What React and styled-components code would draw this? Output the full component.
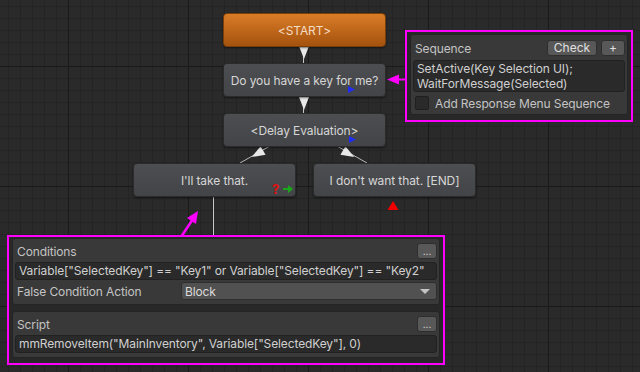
import styled, { createGlobalStyle } from 'styled-components'

const Global = createGlobalStyle`
  html, body { margin: 0; padding: 0; background: #282828; }
  body { font-family: Inter, "Noto Sans", sans-serif; }
`

const Canvas = styled.div`
  position: relative;
  width: 640px;
  height: 372px;
  overflow: hidden;
  background-color: #2a2a2a;
  background-image:
    linear-gradient(to right, #1a1a1a 1px, transparent 1px),
    linear-gradient(to bottom, #1a1a1a 1px, transparent 1px),
    linear-gradient(to right, #242424 1px, transparent 1px),
    linear-gradient(to bottom, #242424 1px, transparent 1px);
  background-size: 120px 120px, 120px 120px, 12px 12px, 12px 12px;
  background-position: 68px 0, 0 66px, 8px 0, 0 6px;
`

const Wires = styled.svg`
  position: absolute;
  left: 0;
  top: 0;
  width: 640px;
  height: 372px;
`

const Node = styled.div`
  position: absolute;
  width: 163px;
  height: 34px;
  box-sizing: border-box;
  display: flex;
  align-items: center;
  justify-content: center;
  border-radius: 4px;
  border: 1px solid ${p => (p.$start ? '#7a3e08' : '#2b2b2b')};
  background: ${p =>
    p.$start
      ? 'linear-gradient(#d97c27, #a4520e)'
      : 'linear-gradient(#4d4e51, #434447)'};
  box-shadow: 0 1px 2px rgba(0, 0, 0, 0.5);
  color: ${p => (p.$start ? '#f4dcc4' : '#d6d6d6')};
  font-size: 12px;
  letter-spacing: -0.1px;
`

const Badge = styled.svg`
  position: absolute;
  overflow: visible;
`

const Panel = styled.div`
  position: absolute;
  box-sizing: border-box;
  border: 2px solid #ff00ff;
  padding: ${p => p.$pad};
  background: #282828;
  color: #c4c4c4;
  font-size: 12px;
  letter-spacing: -0.12px;
`

const Section = styled.div`
  background: #393939;
  border: 1px solid #242424;
  border-radius: 3px;
  padding: ${p => p.$pad};
  display: flex;
  flex-direction: column;
  gap: ${p => p.$gap || '3px'};
  & + & { margin-top: 6px; }
`

const HeaderRow = styled.div`
  display: flex;
  align-items: center;
  height: 16px;
  padding-left: 2px;
  gap: 4px;
`

const Label = styled.span`
  flex: 1;
  color: #c4c4c4;
  white-space: nowrap;
`

const SmallButton = styled.div`
  height: 16px;
  width: ${p => p.$w || '20px'};
  box-sizing: border-box;
  display: flex;
  align-items: center;
  justify-content: center;
  background: #585858;
  border: 1px solid #2e2e2e;
  border-radius: 3px;
  color: #e0e0e0;
  font-size: ${p => p.$fs || '12px'};
  letter-spacing: 0;
  line-height: 1;
`

const Field = styled.div`
  height: ${p => p.$h || '18px'};
  box-sizing: border-box;
  background: #2a2a2a;
  border: 1px solid #212121;
  border-radius: 3px;
  padding: ${p => p.$pad || '0 3px'};
  color: #d0d0d0;
  white-space: nowrap;
  line-height: ${p => p.$lh || '16px'};
`

const Row = styled.div`
  display: flex;
  align-items: center;
  height: 18px;
  padding-left: 2px;
`

const RowLabel = styled.span`
  width: 164px;
  flex-shrink: 0;
`

const Dropdown = styled.div`
  flex: 1;
  height: 18px;
  box-sizing: border-box;
  display: flex;
  align-items: center;
  justify-content: space-between;
  padding: 0 6px 0 3px;
  background: #515151;
  border: 1px solid #2e2e2e;
  border-radius: 3px;
  color: #dcdcdc;
`

const Caret = styled.span`
  width: 0;
  height: 0;
  border-left: 5px solid transparent;
  border-right: 5px solid transparent;
  border-top: 5px solid #c4c4c4;
`

const CheckRow = styled.div`
  display: flex;
  align-items: center;
  gap: 6px;
  height: 14px;
  padding-left: 2px;
`

const CheckBox = styled.span`
  width: 12px;
  height: 12px;
  background: #2a2a2a;
  border: 1px solid #1f1f1f;
  border-radius: 2px;
`

const Arrow = ({ x, y, angle }) => (
  <polygon
    points="-5,-7 5,-7 0,6"
    fill="#e8e8e8"
    transform={`translate(${x} ${y}) rotate(${angle})`}
  />
)

const Flag = () => (
  <polygon points="0,0 7,3.5 0,7" fill="#1f2cf5" />
)

export default function App() {
  return (
    <Canvas>
      <Global />
      <Wires>
        <line x1="303.5" y1="46" x2="303.5" y2="63" stroke="#c8c8c8" strokeWidth="1" />
        <line x1="303.5" y1="97" x2="303.5" y2="113" stroke="#c8c8c8" strokeWidth="1" />
        <line x1="270" y1="146" x2="240" y2="163" stroke="#b8b8b8" strokeWidth="1" />
        <line x1="337" y1="146" x2="367" y2="163" stroke="#b8b8b8" strokeWidth="1" />
        <line x1="213.5" y1="197" x2="213.5" y2="237" stroke="#c8c8c8" strokeWidth="1" />
        <Arrow x={304} y={53} angle={0} />
        <Arrow x={304} y={104} angle={0} />
        <Arrow x={257} y={154} angle={60} />
        <Arrow x={349} y={154} angle={-60} />
        <polygon points="393,201 387.5,210 398.5,210" fill="#f00000" />
        <line x1="398" y1="79.5" x2="405" y2="79.5" stroke="#ff00ff" strokeWidth="2" />
        <polygon points="387,79.5 399,74.5 399,84.5" fill="#ff00ff" />
        <line x1="181" y1="237" x2="193" y2="219" stroke="#ff00ff" strokeWidth="2.5" />
        <polygon points="198,211 187,218 196,224" fill="#ff00ff" />
      </Wires>

      <Node $start style={{ left: 223, top: 13 }}>&lt;START&gt;</Node>
      <Node style={{ left: 223, top: 63 }}>
        Do you have a key for me?
        <Badge width="8" height="8" style={{ left: 124, top: 22 }}>
          <Flag />
        </Badge>
      </Node>
      <Node style={{ left: 223, top: 113 }}>
        &lt;Delay Evaluation&gt;
        <Badge width="8" height="8" style={{ left: 125, top: 22 }}>
          <Flag />
        </Badge>
      </Node>
      <Node style={{ left: 133, top: 163 }}>
        I'll take that.
        <Badge width="26" height="14" style={{ left: 137, top: 18 }}>
          <text x="1" y="12" fill="#e01010" fontSize="13" fontWeight="bold" fontFamily="Inter, sans-serif">?</text>
          <path d="M12 7 H19" stroke="#1aa81a" strokeWidth="2" />
          <polygon points="17,3 22,7 17,11" fill="#1aa81a" />
        </Badge>
      </Node>
      <Node style={{ left: 313, top: 163 }}>I don't want that. [END]</Node>

      <Panel $pad="2px 3px" style={{ left: 405, top: 30, width: 228, height: 92 }}>
        <Section $pad="5px 2px 4px 2px" $gap="4px">
          <HeaderRow>
            <Label>Sequence</Label>
            <SmallButton $w="50px">Check</SmallButton>
            <SmallButton $w="24px">+</SmallButton>
          </HeaderRow>
          <Field $h="32px" $lh="15px" $pad="0 3px">
            SetActive(Key Selection UI);
            <br />
            WaitForMessage(Selected)
          </Field>
          <CheckRow>
            <CheckBox />
            <span>Add Response Menu Sequence</span>
          </CheckRow>
        </Section>
      </Panel>

      <Panel $pad="1px 3px" style={{ left: 7, top: 235, width: 438, height: 130 }}>
        <Section $pad="4px 2px 4px 2px" $gap="3px">
          <HeaderRow>
            <Label>Conditions</Label>
            <SmallButton $fs="10px">...</SmallButton>
          </HeaderRow>
          <Field>
            Variable["SelectedKey"] == "Key1" or Variable["SelectedKey"] == "Key2"
          </Field>
          <Row style={{ marginTop: -1 }}>
            <RowLabel>False Condition Action</RowLabel>
            <Dropdown>
              Block
              <Caret />
            </Dropdown>
          </Row>
        </Section>
        <Section $pad="4px 2px 4px 2px" $gap="3px">
          <HeaderRow>
            <Label>Script</Label>
            <SmallButton $fs="10px">...</SmallButton>
          </HeaderRow>
          <Field>mmRemoveItem("MainInventory", Variable["SelectedKey"], 0)</Field>
        </Section>
      </Panel>
    </Canvas>
  )
}
